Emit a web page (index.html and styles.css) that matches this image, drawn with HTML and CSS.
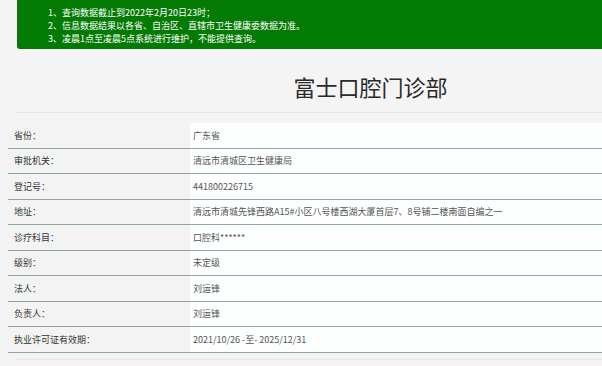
FILE: index.html
```html
<!DOCTYPE html>
<html lang="zh-CN">
<head>
<meta charset="utf-8">
<title>富士口腔门诊部</title>
<link rel="stylesheet" href="styles.css">
</head>
<body>
<div class="page">
  <div class="notice">
    <p>1、查询数据截止到2022年2月20日23时；</p>
    <p>2、信息数据结果以各省、自治区、直辖市卫生健康委数据为准。</p>
    <p>3、凌晨1点至凌晨5点系统进行维护，不能提供查询。</p>
  </div>
  <div class="head">
    <h1 class="title">富士口腔门诊部</h1>
  </div>
  <div class="table">
    <div class="row"><div class="label">省份：</div><div class="value">广东省</div></div>
    <div class="row"><div class="label">审批机关：</div><div class="value">清远市清城区卫生健康局</div></div>
    <div class="row"><div class="label">登记号：</div><div class="value">441800226715</div></div>
    <div class="row"><div class="label">地址：</div><div class="value">清远市清城先锋西路A15#小区八号楼西湖大厦首层7、8号铺二楼南面自编之一</div></div>
    <div class="row"><div class="label">诊疗科目：</div><div class="value">口腔科******</div></div>
    <div class="row"><div class="label">级别：</div><div class="value">未定级</div></div>
    <div class="row"><div class="label">法人：</div><div class="value">刘运锋</div></div>
    <div class="row"><div class="label">负责人：</div><div class="value">刘运锋</div></div>
    <div class="row"><div class="label">执业许可证有效期：</div><div class="value">2021/10/26 -至- 2025/12/31</div></div>
  </div>
  <div class="foot"></div>
</div>
</body>
</html>
```

FILE: styles.css
```css
html, body {
  margin: 0;
  padding: 0;
}
body {
  background: #f4f4f4;
  overflow: hidden;
  font-family: "Noto Sans CJK SC", "Noto Sans", sans-serif;
  font-size: 9px;
  color: #333;
}
.page {
  margin-left: 8px;
}
.notice {
  margin-left: 9px;
  height: 43px;
  padding: 6px 0 0 31px;
  background: #037b03;
  border-bottom-left-radius: 3px;
  color: #fff;
}
.notice p {
  margin: 0;
  line-height: 13px;
  height: 13px;
  white-space: nowrap;
}
.head {
  margin-left: 7px;
  padding-left: 124px;
  height: 63px;
  border-bottom: 1px solid #e6e6e6;
  display: flex;
  align-items: center;
  justify-content: center;
}
.title {
  margin: 10px 0 0 0;
  font-weight: normal;
  font-size: 22px;
  line-height: 26px;
  color: #2a2a2a;
  white-space: nowrap;
}
.table {
  margin-top: 10px;
}
.row {
  display: flex;
  height: 24.5px;
  border-bottom: 1.2px solid #8ea89f;
}
.label {
  width: 176px;
  flex: none;
  padding-left: 6px;
  background: #f3f3f3;
  display: flex;
  align-items: center;
  color: #333;
}
.value {
  flex: 1;
  min-width: 0;
  padding-left: 3px;
  background: #fcfffe;
  display: flex;
  align-items: center;
  color: #555;
  white-space: nowrap;
}
.foot {
  margin-top: 6px;
  margin-left: 7px;
  border-top: 1px solid #e8e8e8;
}
```
